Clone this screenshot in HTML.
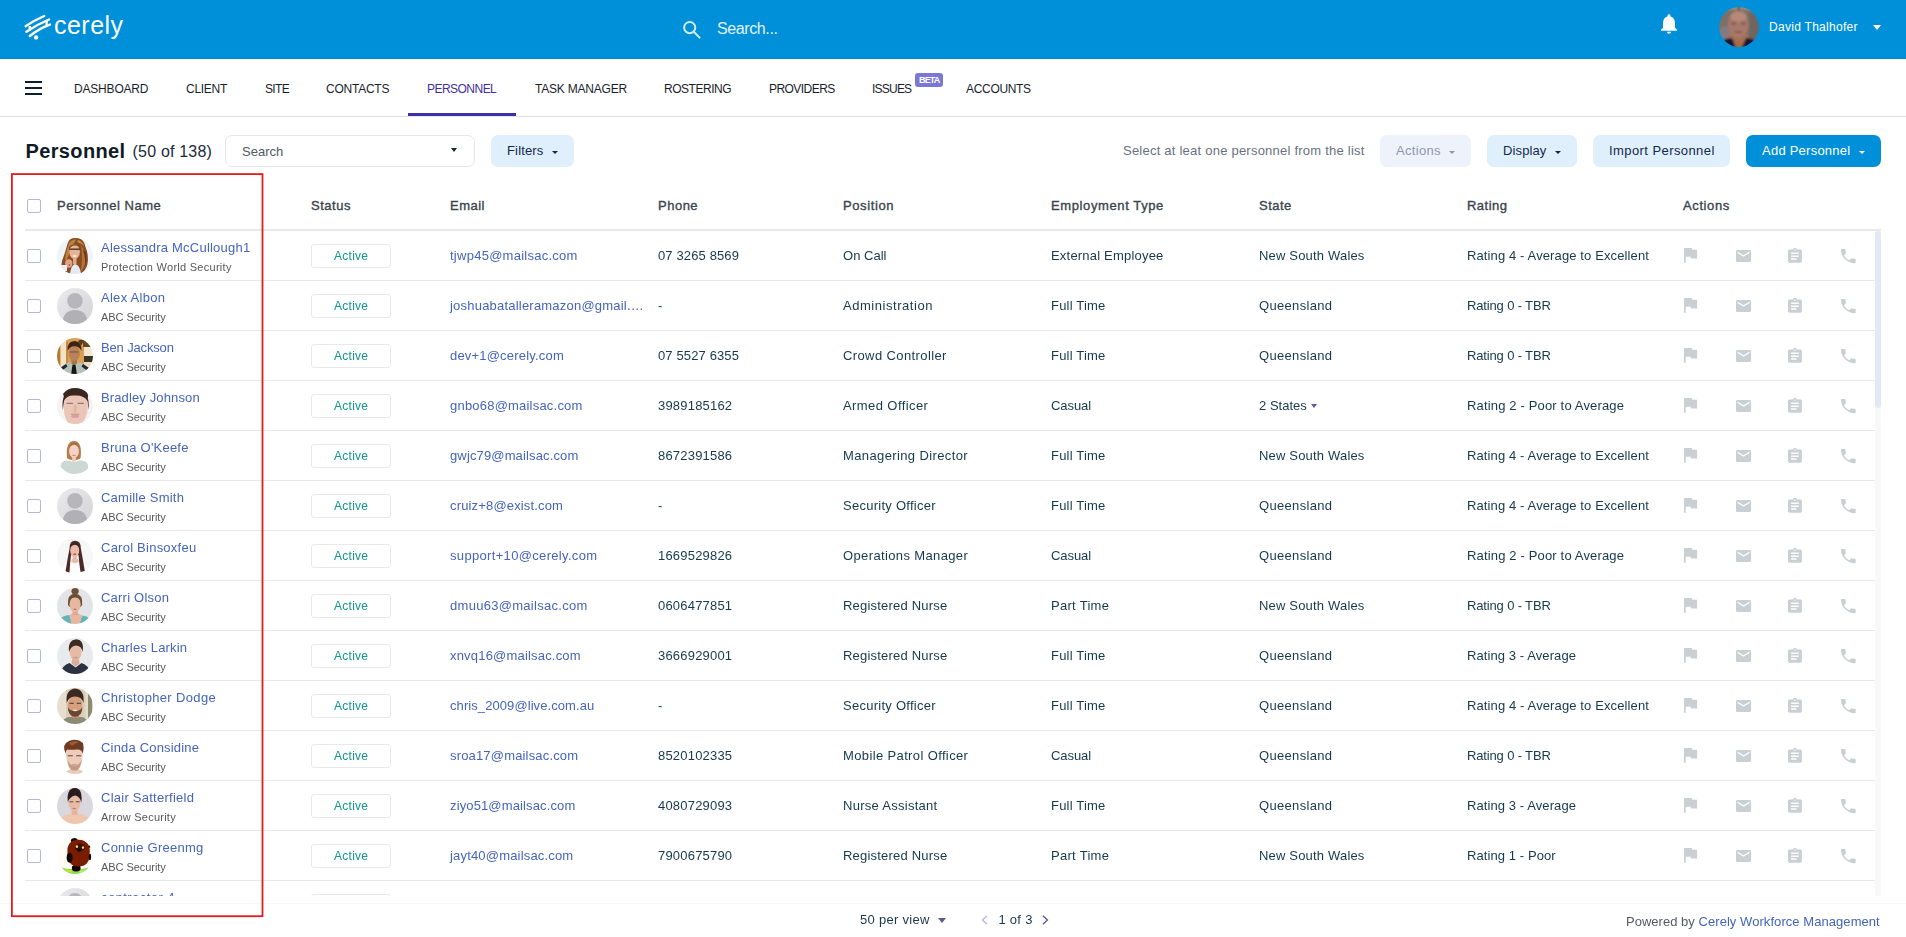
<!DOCTYPE html>
<html lang="en">
<head>
<meta charset="utf-8">
<title>Cerely - Personnel</title>
<style>
*{box-sizing:border-box;margin:0;padding:0}
html,body{width:1906px;height:937px;overflow:hidden;background:#fff}
body{position:relative;font-family:"Liberation Sans",sans-serif;font-size:13px;color:#1b3b50}
a{text-decoration:none;color:inherit}
.t{position:absolute;white-space:pre;display:block}
svg{display:block;position:absolute;overflow:visible}
.topbar{position:absolute;left:0;top:0;width:1906px;height:59px;background:#0090d9;border-bottom:1px solid #0087cd}
.nav{position:absolute;left:0;top:59px;width:1906px;height:58px;border-bottom:1px solid #dfe1ee;background:#fff}
.nav .bar{position:absolute;left:25px;width:17px;height:2px;background:#0b1f33}
.nav .active-line{position:absolute;left:408px;top:54px;width:108px;height:3px;background:#3f2fa3}
.beta{position:absolute;left:915px;top:14px;width:28px;height:14px;border-radius:3px;background:#7a77d6}
.toolbar{position:absolute;left:0;top:117px;width:1906px;height:58px}
.searchbox{position:absolute;left:225px;top:18px;width:250px;height:32px;border:1px solid #e6e6f0;border-radius:7px;background:#fff}
.btn{position:absolute;top:18px;height:32px;border-radius:7px;background:#e0effc}
.btn.disabled{background:#eef2fb}
.btn.primary{background:#0090d9}
.caret{position:absolute;width:0;height:0;border-left:3px solid transparent;border-right:3px solid transparent;border-top:3px solid #1b3b50}
.thead{position:absolute;left:25px;top:175px;width:1856px;height:56px;border-bottom:2px solid #e9e9ec}
.cb{position:absolute;width:14px;height:14px;border:1px solid #b3b6dd;border-radius:2px;background:#fff}
.tbody{position:absolute;left:0;top:231px;width:1906px;height:665px;overflow:hidden;will-change:transform}
.row{position:absolute;left:25px;width:1850px;height:50px;border-bottom:1px solid #e9e9ec}
.pill{position:absolute;left:286px;top:13px;width:80px;height:24px;border:1px solid #e9e9eb;border-radius:3px;background:#fff}
.av{position:absolute;left:32px;top:7px;width:36px;height:36px;border-radius:50%;overflow:hidden}
.scroll-track{position:absolute;left:1875px;top:231px;width:6px;height:665px;background:#f8f8f8}
.scroll-thumb{position:absolute;left:1875px;top:231px;width:6px;height:177px;border-radius:3px;background:#e2e9f4}
.footer{position:absolute;left:0;top:903px;width:1906px;height:34px;border-top:1px solid #f8f8fa;will-change:transform}
.th{-webkit-text-stroke:0.35px #3a444e}

</style>
</head>
<body>
<svg width="0" height="0" style="left:0;top:0"><defs><filter id="bl" x="-10%" y="-10%" width="120%" height="120%"><feGaussianBlur stdDeviation="0.6"/></filter><linearGradient id="pg" x1="0" y1="0" x2="1" y2="1"><stop offset="0" stop-color="#ebebed"/><stop offset="1" stop-color="#d3d3d6"/></linearGradient></defs></svg>
<header class="topbar">
<svg style="left:24px;top:14px" width="28" height="27" viewBox="24 14 28 27" fill="none" stroke="#fff" stroke-width="2.4" stroke-linecap="round">
<path d="M25.6 26.2 Q35 20 44.2 16"/>
<path d="M26.4 31.8 Q37 24.5 49 19.5"/>
<path d="M29.8 36 Q39 28.5 50 24.6"/>
<path d="M29.800 26 V30.400 M46.600 20.600 V26" stroke-width="2.4" stroke-linecap="butt"/>
<circle cx="36.1" cy="37.4" r="2.2" fill="#fff" stroke="none"/>
</svg>
<span class="t" style="left:54px;top:9px;font-size:25px;line-height:33px;color:#fff;letter-spacing:0.47px">cerely</span>
<svg style="left:682px;top:20px" width="20" height="20" viewBox="682 20 20 20" fill="none" stroke="#d4ece6" stroke-width="2" stroke-linecap="round"><circle cx="689.7" cy="27.6" r="5.6"/><path d="M694 32 L699.6 37.6"/></svg>
<span class="t" style="left:717px;top:17px;font-size:16px;line-height:24px;color:#e3f3fb;letter-spacing:-0.39px">Search...</span>
<svg style="left:1661px;top:14px" width="16" height="20" viewBox="4 2.5 16 19.5" fill="#fff"><path d="M12 22c1.1 0 2-.9 2-2h-4c0 1.1.89 2 2 2zm6-6v-5c0-3.07-1.64-5.64-4.5-6.32V4c0-.83-.67-1.500-1.500-1.500s-1.500.67-1.500 1.500v.68C7.630 5.360 6 7.920 6 11v5l-2 2v1h16v-1l-2-2z"/></svg>
<svg style="left:1719px;top:7px" width="40" height="40" viewBox="0 0 40 40"><defs><clipPath id="uc"><circle cx="20" cy="20" r="19.900"/></clipPath><filter id="ub" x="-10%" y="-10%" width="120%" height="120%"><feGaussianBlur stdDeviation="1.1"/></filter></defs><g clip-path="url(#uc)"><g filter="url(#ub)"><rect x="-3" y="-3" width="46" height="46" fill="#7b7067"/><rect x="-3" y="-3" width="46" height="6" fill="#96897c"/><rect x="19" y="-3" width="1.500" height="7" fill="#4a4038"/><ellipse cx="6" cy="28" rx="7" ry="9" fill="#857a80"/><rect x="30" y="6" width="13" height="30" fill="#70665f"/><rect x="10" y="27" width="19" height="16" fill="#a56e55"/><path d="M0 43 L3 34 Q8 30.500 13 31 L18.500 43 Z" fill="#1b1930"/><path d="M40 43 L36.500 34 Q32 30.500 27 31 L21.500 43 Z" fill="#1b1930"/><ellipse cx="19.300" cy="17.500" rx="10.200" ry="13.800" fill="#a8786a"/><ellipse cx="19.500" cy="9.500" rx="8" ry="5" fill="#b68978"/><ellipse cx="14.600" cy="16.600" rx="2.800" ry="1.300" fill="#80565a"/><ellipse cx="24.200" cy="16.600" rx="2.800" ry="1.300" fill="#80565a"/><ellipse cx="19.500" cy="25" rx="4" ry="1" fill="#8a5550"/><ellipse cx="19.500" cy="38" rx="4" ry="3" fill="#a9683f"/></g></g></svg>
<span class="t" style="left:1769px;top:17px;font-size:12px;line-height:20px;color:#fff;letter-spacing:0.29px">David Thalhofer</span>
<i class="caret" style="left:1873px;top:25px;border-left-width:4.0px;border-right-width:4.0px;border-top:5px solid #fff"></i>
</header>
<nav class="nav">
<i class="bar" style="top:22px"></i><i class="bar" style="top:28px"></i><i class="bar" style="top:34px"></i>
<a class="t" style="left:74px;top:20px;font-size:12px;line-height:20px;color:#1a1e2c;letter-spacing:-0.19px">DASHBOARD</a>
<a class="t" style="left:186px;top:20px;font-size:12px;line-height:20px;color:#1a1e2c;letter-spacing:-0.28px">CLIENT</a>
<a class="t" style="left:265px;top:20px;font-size:12px;line-height:20px;color:#1a1e2c;letter-spacing:-0.64px">SITE</a>
<a class="t" style="left:326px;top:20px;font-size:12px;line-height:20px;color:#1a1e2c;letter-spacing:-0.24px">CONTACTS</a>
<a class="t" style="left:427px;top:20px;font-size:12px;line-height:20px;color:#3f2fa3;letter-spacing:-0.53px">PERSONNEL</a>
<a class="t" style="left:535px;top:20px;font-size:12px;line-height:20px;color:#1a1e2c;letter-spacing:-0.21px">TASK MANAGER</a>
<a class="t" style="left:664px;top:20px;font-size:12px;line-height:20px;color:#1a1e2c;letter-spacing:-0.46px">ROSTERING</a>
<a class="t" style="left:769px;top:20px;font-size:12px;line-height:20px;color:#1a1e2c;letter-spacing:-0.55px">PROVIDERS</a>
<a class="t" style="left:872px;top:20px;font-size:12px;line-height:20px;color:#1a1e2c;letter-spacing:-0.78px">ISSUES</a>
<a class="t" style="left:966px;top:20px;font-size:12px;line-height:20px;color:#1a1e2c;letter-spacing:-0.32px">ACCOUNTS</a>
<i class="active-line"></i>
<i class="beta"></i>
<span class="t" style="left:919px;top:13px;font-size:9px;line-height:17px;color:#fff;font-weight:bold;letter-spacing:-0.83px">BETA</span>
</nav>
<section class="toolbar">
<h1 class="t" style="left:25.6px;top:20px;font-size:20px;line-height:28px;color:#0e1b26;font-weight:bold;letter-spacing:0.34px">Personnel</h1>
<span class="t" style="left:132.6px;top:23px;font-size:16px;line-height:24px;color:#1b2a3a;letter-spacing:0.19px">(50 of 138)</span>
<div class="searchbox"></div>
<span class="t" style="left:242px;top:24px;font-size:13px;line-height:21px;color:#525a64;letter-spacing:0.03px">Search</span>
<i class="caret" style="left:451px;top:31px;border-left-width:3.0px;border-right-width:3.0px;border-top:4px solid #1c2530"></i>
<div class="btn" style="left:491px;width:83px"></div>
<span class="t" style="left:507px;top:23px;font-size:13px;line-height:21px;color:#13294b;letter-spacing:0.16px">Filters</span>
<i class="caret" style="left:552px;top:34px;border-left-width:3.0px;border-right-width:3.0px;border-top:3px solid #12283a"></i>
<span class="t" style="left:1123px;top:23px;font-size:13px;line-height:21px;color:#68727e;letter-spacing:0.23px">Select at leat one personnel from the list</span>
<div class="btn disabled" style="left:1380px;width:91px"></div>
<span class="t" style="left:1396px;top:23px;font-size:13px;line-height:21px;color:#8e98aa;letter-spacing:0.31px">Actions</span>
<i class="caret" style="left:1449px;top:34px;border-left-width:3.0px;border-right-width:3.0px;border-top:3px solid #8e98aa"></i>
<div class="btn" style="left:1487px;width:90px"></div>
<span class="t" style="left:1503px;top:23px;font-size:13px;line-height:21px;color:#13294b;letter-spacing:0.12px">Display</span>
<i class="caret" style="left:1555px;top:34px;border-left-width:3.0px;border-right-width:3.0px;border-top:3px solid #12283a"></i>
<div class="btn" style="left:1593px;width:137px"></div>
<span class="t" style="left:1609px;top:23px;font-size:13px;line-height:21px;color:#13294b;letter-spacing:0.42px">Import Personnel</span>
<div class="btn primary" style="left:1746px;width:135px"></div>
<span class="t" style="left:1762px;top:23px;font-size:13px;line-height:21px;color:#fff;letter-spacing:0.24px">Add Personnel</span>
<i class="caret" style="left:1859px;top:34px;border-left-width:3.0px;border-right-width:3.0px;border-top:3px solid #fff"></i>
</section>
<div class="thead">
<i class="cb" style="left:2px;top:24px"></i>
<span class="t th" style="left:32px;top:20px;font-size:13px;line-height:21px;color:#3a444e;letter-spacing:0.54px">Personnel Name</span>
<span class="t th" style="left:286px;top:20px;font-size:13px;line-height:21px;color:#3a444e;letter-spacing:0.52px">Status</span>
<span class="t th" style="left:425px;top:20px;font-size:13px;line-height:21px;color:#3a444e;letter-spacing:0.49px">Email</span>
<span class="t th" style="left:633px;top:20px;font-size:13px;line-height:21px;color:#3a444e;letter-spacing:0.5px">Phone</span>
<span class="t th" style="left:818px;top:20px;font-size:13px;line-height:21px;color:#3a444e;letter-spacing:0.6px">Position</span>
<span class="t th" style="left:1026px;top:20px;font-size:13px;line-height:21px;color:#3a444e;letter-spacing:0.61px">Employment Type</span>
<span class="t th" style="left:1234px;top:20px;font-size:13px;line-height:21px;color:#3a444e;letter-spacing:0.48px">State</span>
<span class="t th" style="left:1442px;top:20px;font-size:13px;line-height:21px;color:#3a444e;letter-spacing:0.48px">Rating</span>
<span class="t th" style="left:1658px;top:20px;font-size:13px;line-height:21px;color:#3a444e;letter-spacing:0.61px">Actions</span>
</div>
<div class="tbody">
<div class="row" style="top:0px">
<i class="cb" style="left:2px;top:18px"></i>
<div class="av"><svg style="left:0;top:0" width="36" height="36" viewBox="0 0 36 36"><g filter="url(#bl)"><rect x="-2" y="-2" width="40" height="40" fill="#eef4f7"/><path d="M10.500 6 Q12 -0.500 19 -0.500 Q27 0 28.500 9 Q32 17 30.500 26 Q29 33 23 36 L9 36 Q3 31 5 23 Q8 15 10.500 6 Z" fill="#8a4e22"/><path d="M12 5 Q15 1 19 1.500 Q16 6 13 14 Q11 20 7.500 25 Q8.500 14 12 5 Z" fill="#bd7f42"/><path d="M24 7 Q28.500 14 29 24 Q27 30 23.500 34 Q26.500 22 24 7 Z" fill="#b3733a"/><path d="M8 22 Q7 28 10 33 Q9 27 10.500 22 Z" fill="#6a3817"/><path d="M26 12 Q29 20 27.500 29 Q30.500 22 29 14 Z" fill="#6a3817"/><path d="M21 2 Q25 3 27 8 Q24 5 20 4 Z" fill="#c98c4c"/><path d="M13 36 Q14 27 18 26 Q23 27 24 36 Z" fill="#e4eaf3"/><ellipse cx="17.6" cy="13.8" rx="5.3" ry="7.2" fill="#e8b496"/><rect x="16" y="20" width="3.5" height="6" fill="#e2aa8a"/><path d="M12 9 Q17 3.500 23.400 9 Q20 7.300 17.500 7.600 Q14 7.800 12 11.500 Z" fill="#7c441d"/><rect x="12.2" y="10.5" width="11" height="1.4" fill="#4a3428"/><ellipse cx="17.8" cy="18" rx="2.2" ry="0.8" fill="#fff"/><ellipse cx="11.7" cy="25.5" rx="3.6" ry="4.2" fill="#e0a585"/><ellipse cx="12.5" cy="27" rx="0.7" ry="0.7" fill="#a02030"/><rect x="3" y="27" width="7" height="6" fill="#e9eef6"/></g></svg></div>
<a class="t" style="left:76px;top:6px;font-size:13px;line-height:21px;color:#4565bd;letter-spacing:0.22px">Alessandra McCullough1</a>
<span class="t" style="left:76px;top:27px;font-size:11px;line-height:19px;color:#585858;letter-spacing:0.27px">Protection World Security</span>
<i class="pill"></i>
<span class="t" style="left:309px;top:15px;font-size:12px;line-height:20px;color:#12978a;letter-spacing:0.27px">Active</span>
<a class="t" style="left:425px;top:14px;font-size:13px;line-height:21px;color:#4565bd;letter-spacing:0.26px">tjwp45@mailsac.com</a>
<span class="t" style="left:633px;top:14px;font-size:13px;line-height:21px;color:#15394d;letter-spacing:0.13px">07 3265 8569</span>
<span class="t" style="left:818px;top:14px;font-size:13px;line-height:21px;color:#15394d;letter-spacing:0.02px">On Call</span>
<span class="t" style="left:1026px;top:14px;font-size:13px;line-height:21px;color:#15394d;letter-spacing:0.2px">External Employee</span>
<span class="t" style="left:1234px;top:14px;font-size:13px;line-height:21px;color:#15394d;letter-spacing:0.18px">New South Wales</span>
<span class="t" style="left:1442px;top:14px;font-size:13px;line-height:21px;color:#15394d;letter-spacing:0.12px">Rating 4 - Average to Excellent</span>
<svg style="left:1659px;top:17.3px" width="13.1" height="14.8" viewBox="5 4 15 17" preserveAspectRatio="none" fill="#c9cfd3"><path d="M14.4 6L14 4H5v17h2v-7h5.6l.4 2h7V6z"/></svg><svg style="left:1710.6px;top:18.9px" width="15.1" height="12" viewBox="2 4 20 16" preserveAspectRatio="none" fill="#c9cfd3"><path d="M20 4H4c-1.1 0-1.990.9-1.990 2L2 18c0 1.1.9 2 2 2h16c1.1 0 2-.9 2-2V6c0-1.1-.9-2-2-2zm0 4l-8 5-8-5V6l8 5 8-5v2z"/></svg><svg style="left:1763px;top:17.3px" width="13.9" height="14.8" viewBox="3 1 18 20" preserveAspectRatio="none" fill="#c9cfd3"><path d="M19 3h-4.180C14.400 1.840 13.300 1 12 1c-1.300 0-2.400.84-2.820 2H5c-1.100 0-2 .9-2 2v14c0 1.100.9 2 2 2h14c1.100 0 2-.9 2-2V5c0-1.100-.9-2-2-2zm-7 0c.55 0 1 .45 1 1s-.45 1-1 1-1-.45-1-1 .45-1 1-1zm2 14H7v-2h7v2zm3-4H7v-2h10v2zm0-4H7V7h10v2z"/></svg><svg style="left:1815.6px;top:18px" width="14.7" height="14.2" viewBox="3 3 18 18" preserveAspectRatio="none" fill="#c9cfd3"><path d="M6.620 10.790c1.440 2.830 3.760 5.140 6.590 6.590l2.200-2.200c.27-.27.67-.36 1.020-.24 1.120.37 2.330.57 3.570.57.55 0 1 .45 1 1V20c0 .55-.45 1-1 1-9.390 0-17-7.610-17-17 0-.55.45-1 1-1h3.500c.55 0 1 .45 1 1 0 1.250.2 2.450.57 3.570.11.35.03.74-.25 1.020l-2.200 2.200z"/></svg>
</div>
<div class="row" style="top:50px">
<i class="cb" style="left:2px;top:18px"></i>
<div class="av"><svg style="left:0;top:0" width="36" height="36" viewBox="0 0 36 36"><rect x="0" y="0" width="36" height="36" fill="url(#pg)"/><circle cx="18" cy="12.900" r="8.600" fill="#e6e6e8"/><circle cx="18" cy="12.900" r="7.900" fill="#b7b7bb"/><path d="M5.600 36 Q5.600 22 18 22 Q30.400 22 30.400 36 Z" fill="#b1b1b5"/></svg></div>
<a class="t" style="left:76px;top:6px;font-size:13px;line-height:21px;color:#4565bd;letter-spacing:0.28px">Alex Albon</a>
<span class="t" style="left:76px;top:27px;font-size:11px;line-height:19px;color:#585858;letter-spacing:-0.05px">ABC Security</span>
<i class="pill"></i>
<span class="t" style="left:309px;top:15px;font-size:12px;line-height:20px;color:#12978a;letter-spacing:0.27px">Active</span>
<a class="t" style="left:425px;top:14px;font-size:13px;line-height:21px;color:#4565bd;letter-spacing:0.21px">joshuabatalleramazon@gmail.…</a>
<span class="t" style="left:633px;top:14px;font-size:13px;line-height:21px;color:#15394d;letter-spacing:-0.16px">-</span>
<span class="t" style="left:818px;top:14px;font-size:13px;line-height:21px;color:#15394d;letter-spacing:0.54px">Administration</span>
<span class="t" style="left:1026px;top:14px;font-size:13px;line-height:21px;color:#15394d;letter-spacing:0.2px">Full Time</span>
<span class="t" style="left:1234px;top:14px;font-size:13px;line-height:21px;color:#15394d;letter-spacing:0.32px">Queensland</span>
<span class="t" style="left:1442px;top:14px;font-size:13px;line-height:21px;color:#15394d;letter-spacing:-0.15px">Rating 0 - TBR</span>
<svg style="left:1659px;top:17.3px" width="13.1" height="14.8" viewBox="5 4 15 17" preserveAspectRatio="none" fill="#c9cfd3"><path d="M14.4 6L14 4H5v17h2v-7h5.6l.4 2h7V6z"/></svg><svg style="left:1710.6px;top:18.9px" width="15.1" height="12" viewBox="2 4 20 16" preserveAspectRatio="none" fill="#c9cfd3"><path d="M20 4H4c-1.1 0-1.990.9-1.990 2L2 18c0 1.1.9 2 2 2h16c1.1 0 2-.9 2-2V6c0-1.1-.9-2-2-2zm0 4l-8 5-8-5V6l8 5 8-5v2z"/></svg><svg style="left:1763px;top:17.3px" width="13.9" height="14.8" viewBox="3 1 18 20" preserveAspectRatio="none" fill="#c9cfd3"><path d="M19 3h-4.180C14.400 1.840 13.300 1 12 1c-1.300 0-2.400.84-2.820 2H5c-1.100 0-2 .9-2 2v14c0 1.100.9 2 2 2h14c1.100 0 2-.9 2-2V5c0-1.100-.9-2-2-2zm-7 0c.55 0 1 .45 1 1s-.45 1-1 1-1-.45-1-1 .45-1 1-1zm2 14H7v-2h7v2zm3-4H7v-2h10v2zm0-4H7V7h10v2z"/></svg><svg style="left:1815.6px;top:18px" width="14.7" height="14.2" viewBox="3 3 18 18" preserveAspectRatio="none" fill="#c9cfd3"><path d="M6.620 10.790c1.440 2.830 3.760 5.140 6.590 6.590l2.200-2.200c.27-.27.67-.36 1.020-.24 1.120.37 2.330.57 3.570.57.55 0 1 .45 1 1V20c0 .55-.45 1-1 1-9.390 0-17-7.610-17-17 0-.55.45-1 1-1h3.500c.55 0 1 .45 1 1 0 1.250.2 2.450.57 3.570.11.35.03.74-.25 1.020l-2.200 2.200z"/></svg>
</div>
<div class="row" style="top:100px">
<i class="cb" style="left:2px;top:18px"></i>
<div class="av"><svg style="left:0;top:0" width="36" height="36" viewBox="0 0 36 36"><g filter="url(#bl)"><rect x="-2" y="-2" width="40" height="40" fill="#dca055"/><rect x="0" y="0" width="3.5" height="36" fill="#b87830"/><rect x="3.5" y="0" width="5.5" height="36" fill="#f3e2c4"/><rect x="9" y="4" width="2" height="30" fill="#c88a40"/><rect x="26" y="0" width="10" height="9" fill="#6e4420"/><rect x="27" y="9" width="9" height="9" fill="#f6e8d0"/><rect x="27" y="18" width="9" height="6" fill="#3a3028"/><rect x="27" y="24" width="9" height="12" fill="#f0dcb8"/><path d="M2 36 Q4 26 12 24.500 L23 24.500 Q31 26 33 36 Z" fill="#b6c2b6"/><path d="M3 30 L9 26 L10.500 28.500 L4.500 33 Z" fill="#23283a"/><path d="M32 30 L26 26 L24.500 28.500 L30.500 33 Z" fill="#23283a"/><rect x="14.5" y="21" width="5.5" height="5" fill="#a8744c"/><path d="M15.500 26.500 L18.500 26.500 L19.800 36 L14.200 36 Z" fill="#151518"/><ellipse cx="17.2" cy="15.5" rx="5.7" ry="7.6" fill="#b8825a"/><path d="M10.600 13 Q10 3 17.500 3 Q25 3 24.400 13 Q22.500 8.500 17.500 8.300 Q12.500 8.500 10.600 13 Z" fill="#3a2616"/><path d="M21 3 Q26 0 27 4 Q25 5 24 8 Z" fill="#5a3a1c"/><rect x="13" y="13.5" width="8.5" height="0.9" fill="#6a4a38"/></g></svg></div>
<a class="t" style="left:76px;top:6px;font-size:13px;line-height:21px;color:#4565bd;letter-spacing:-0.15px">Ben Jackson</a>
<span class="t" style="left:76px;top:27px;font-size:11px;line-height:19px;color:#585858;letter-spacing:-0.05px">ABC Security</span>
<i class="pill"></i>
<span class="t" style="left:309px;top:15px;font-size:12px;line-height:20px;color:#12978a;letter-spacing:0.27px">Active</span>
<a class="t" style="left:425px;top:14px;font-size:13px;line-height:21px;color:#4565bd;letter-spacing:0.19px">dev+1@cerely.com</a>
<span class="t" style="left:633px;top:14px;font-size:13px;line-height:21px;color:#15394d;letter-spacing:0.13px">07 5527 6355</span>
<span class="t" style="left:818px;top:14px;font-size:13px;line-height:21px;color:#15394d;letter-spacing:0.39px">Crowd Controller</span>
<span class="t" style="left:1026px;top:14px;font-size:13px;line-height:21px;color:#15394d;letter-spacing:0.2px">Full Time</span>
<span class="t" style="left:1234px;top:14px;font-size:13px;line-height:21px;color:#15394d;letter-spacing:0.32px">Queensland</span>
<span class="t" style="left:1442px;top:14px;font-size:13px;line-height:21px;color:#15394d;letter-spacing:-0.15px">Rating 0 - TBR</span>
<svg style="left:1659px;top:17.3px" width="13.1" height="14.8" viewBox="5 4 15 17" preserveAspectRatio="none" fill="#c9cfd3"><path d="M14.4 6L14 4H5v17h2v-7h5.6l.4 2h7V6z"/></svg><svg style="left:1710.6px;top:18.9px" width="15.1" height="12" viewBox="2 4 20 16" preserveAspectRatio="none" fill="#c9cfd3"><path d="M20 4H4c-1.1 0-1.990.9-1.990 2L2 18c0 1.1.9 2 2 2h16c1.1 0 2-.9 2-2V6c0-1.1-.9-2-2-2zm0 4l-8 5-8-5V6l8 5 8-5v2z"/></svg><svg style="left:1763px;top:17.3px" width="13.9" height="14.8" viewBox="3 1 18 20" preserveAspectRatio="none" fill="#c9cfd3"><path d="M19 3h-4.180C14.400 1.840 13.300 1 12 1c-1.300 0-2.400.84-2.820 2H5c-1.100 0-2 .9-2 2v14c0 1.100.9 2 2 2h14c1.100 0 2-.9 2-2V5c0-1.100-.9-2-2-2zm-7 0c.55 0 1 .45 1 1s-.45 1-1 1-1-.45-1-1 .45-1 1-1zm2 14H7v-2h7v2zm3-4H7v-2h10v2zm0-4H7V7h10v2z"/></svg><svg style="left:1815.6px;top:18px" width="14.7" height="14.2" viewBox="3 3 18 18" preserveAspectRatio="none" fill="#c9cfd3"><path d="M6.620 10.790c1.440 2.830 3.760 5.140 6.590 6.590l2.200-2.200c.27-.27.67-.36 1.020-.24 1.120.37 2.330.57 3.570.57.55 0 1 .45 1 1V20c0 .55-.45 1-1 1-9.390 0-17-7.610-17-17 0-.55.45-1 1-1h3.500c.55 0 1 .45 1 1 0 1.250.2 2.450.57 3.570.11.35.03.74-.25 1.020l-2.200 2.200z"/></svg>
</div>
<div class="row" style="top:150px">
<i class="cb" style="left:2px;top:18px"></i>
<div class="av"><svg style="left:0;top:0" width="36" height="36" viewBox="0 0 36 36"><g filter="url(#bl)"><rect x="-2" y="-2" width="40" height="40" fill="#f3f3f3"/><path d="M5.800 22 Q3.500 2 18 -1 Q33.500 1 31.500 22 L30.500 14 Q26 8 18 8.500 Q10 9 7 14 Z" fill="#3a2823"/><path d="M7 13 Q9 7 18 7.500 Q27 7 30.500 13 Q32 26 26 34 Q22 37.500 18 37.500 Q14 37.500 10.500 34 Q5.500 26 7 13 Z" fill="#ebc6b6"/><path d="M6 6 Q12 -2 24 0 Q32 3 31 10 Q26 5 19 6 Q12 6 8 11 Z" fill="#3a2823"/><rect x="9.5" y="14.8" width="6.5" height="1.2" fill="#8a7a80"/><rect x="20.5" y="14.8" width="6.5" height="1.2" fill="#8a7a80"/><rect x="16.8" y="17" width="2.6" height="7.5" fill="#e0b4a4"/><ellipse cx="18.2" cy="28.6" rx="4" ry="1.4" fill="#d9a0a2"/><ellipse cx="18.2" cy="26.5" rx="4.5" ry="1" fill="#caa090"/></g></svg></div>
<a class="t" style="left:76px;top:6px;font-size:13px;line-height:21px;color:#4565bd;letter-spacing:0.13px">Bradley Johnson</a>
<span class="t" style="left:76px;top:27px;font-size:11px;line-height:19px;color:#585858;letter-spacing:-0.05px">ABC Security</span>
<i class="pill"></i>
<span class="t" style="left:309px;top:15px;font-size:12px;line-height:20px;color:#12978a;letter-spacing:0.27px">Active</span>
<a class="t" style="left:425px;top:14px;font-size:13px;line-height:21px;color:#4565bd;letter-spacing:0.21px">gnbo68@mailsac.com</a>
<span class="t" style="left:633px;top:14px;font-size:13px;line-height:21px;color:#15394d;letter-spacing:0.2px">3989185162</span>
<span class="t" style="left:818px;top:14px;font-size:13px;line-height:21px;color:#15394d;letter-spacing:0.41px">Armed Officer</span>
<span class="t" style="left:1026px;top:14px;font-size:13px;line-height:21px;color:#15394d;letter-spacing:-0.06px">Casual</span>
<span class="t" style="left:1234px;top:14px;font-size:13px;line-height:21px;color:#15394d;letter-spacing:0.02px">2 States</span>
<i class="caret" style="left:1286px;top:23px;border-left-width:3.0px;border-right-width:3.0px;border-top:4px solid #5e5a9a"></i>
<span class="t" style="left:1442px;top:14px;font-size:13px;line-height:21px;color:#15394d;letter-spacing:0.16px">Rating 2 - Poor to Average</span>
<svg style="left:1659px;top:17.3px" width="13.1" height="14.8" viewBox="5 4 15 17" preserveAspectRatio="none" fill="#c9cfd3"><path d="M14.4 6L14 4H5v17h2v-7h5.6l.4 2h7V6z"/></svg><svg style="left:1710.6px;top:18.9px" width="15.1" height="12" viewBox="2 4 20 16" preserveAspectRatio="none" fill="#c9cfd3"><path d="M20 4H4c-1.1 0-1.990.9-1.990 2L2 18c0 1.1.9 2 2 2h16c1.1 0 2-.9 2-2V6c0-1.1-.9-2-2-2zm0 4l-8 5-8-5V6l8 5 8-5v2z"/></svg><svg style="left:1763px;top:17.3px" width="13.9" height="14.8" viewBox="3 1 18 20" preserveAspectRatio="none" fill="#c9cfd3"><path d="M19 3h-4.180C14.400 1.840 13.300 1 12 1c-1.300 0-2.400.84-2.820 2H5c-1.100 0-2 .9-2 2v14c0 1.100.9 2 2 2h14c1.100 0 2-.9 2-2V5c0-1.100-.9-2-2-2zm-7 0c.55 0 1 .45 1 1s-.45 1-1 1-1-.45-1-1 .45-1 1-1zm2 14H7v-2h7v2zm3-4H7v-2h10v2zm0-4H7V7h10v2z"/></svg><svg style="left:1815.6px;top:18px" width="14.7" height="14.2" viewBox="3 3 18 18" preserveAspectRatio="none" fill="#c9cfd3"><path d="M6.620 10.790c1.440 2.830 3.760 5.140 6.590 6.590l2.200-2.200c.27-.27.67-.36 1.020-.24 1.120.37 2.330.57 3.570.57.55 0 1 .45 1 1V20c0 .55-.45 1-1 1-9.390 0-17-7.610-17-17 0-.55.45-1 1-1h3.500c.55 0 1 .45 1 1 0 1.250.2 2.450.57 3.570.11.35.03.74-.25 1.020l-2.200 2.200z"/></svg>
</div>
<div class="row" style="top:200px">
<i class="cb" style="left:2px;top:18px"></i>
<div class="av"><svg style="left:0;top:0" width="36" height="36" viewBox="0 0 36 36"><g filter="url(#bl)"><rect x="-2" y="-2" width="40" height="40" fill="#ffffff"/><path d="M10 20 Q8.500 3 17 3 Q25.500 3 23.600 20 Q22 22 17 22 Q12 22 10 20 Z" fill="#b57d4d"/><ellipse cx="17" cy="13.2" rx="4.9" ry="6.8" fill="#f3d4c4"/><path d="M12 9 Q14 4.500 17 4.600 Q21 4.500 22.200 9.500 Q19 6.500 17 6.800 Q14 7 12 9 Z" fill="#a87040"/><rect x="15.2" y="18.5" width="3.6" height="5" fill="#efcbb8"/><path d="M3.800 27 Q4.500 22.500 12 22.600 Q17 25 22 22.600 Q30 22.500 31 27 Q32 33 28 34 Q22 36 17 36 Q10 36 6 34 Q2.800 32 3.800 27 Z" fill="#cdd8d4"/><ellipse cx="17" cy="17.4" rx="1.8" ry="0.7" fill="#d98080"/></g></svg></div>
<a class="t" style="left:76px;top:6px;font-size:13px;line-height:21px;color:#4565bd;letter-spacing:0.21px">Bruna O&#x27;Keefe</a>
<span class="t" style="left:76px;top:27px;font-size:11px;line-height:19px;color:#585858;letter-spacing:-0.05px">ABC Security</span>
<i class="pill"></i>
<span class="t" style="left:309px;top:15px;font-size:12px;line-height:20px;color:#12978a;letter-spacing:0.27px">Active</span>
<a class="t" style="left:425px;top:14px;font-size:13px;line-height:21px;color:#4565bd;letter-spacing:0.14px">gwjc79@mailsac.com</a>
<span class="t" style="left:633px;top:14px;font-size:13px;line-height:21px;color:#15394d;letter-spacing:0.2px">8672391586</span>
<span class="t" style="left:818px;top:14px;font-size:13px;line-height:21px;color:#15394d;letter-spacing:0.38px">Managering Director</span>
<span class="t" style="left:1026px;top:14px;font-size:13px;line-height:21px;color:#15394d;letter-spacing:0.2px">Full Time</span>
<span class="t" style="left:1234px;top:14px;font-size:13px;line-height:21px;color:#15394d;letter-spacing:0.18px">New South Wales</span>
<span class="t" style="left:1442px;top:14px;font-size:13px;line-height:21px;color:#15394d;letter-spacing:0.12px">Rating 4 - Average to Excellent</span>
<svg style="left:1659px;top:17.3px" width="13.1" height="14.8" viewBox="5 4 15 17" preserveAspectRatio="none" fill="#c9cfd3"><path d="M14.4 6L14 4H5v17h2v-7h5.6l.4 2h7V6z"/></svg><svg style="left:1710.6px;top:18.9px" width="15.1" height="12" viewBox="2 4 20 16" preserveAspectRatio="none" fill="#c9cfd3"><path d="M20 4H4c-1.1 0-1.990.9-1.990 2L2 18c0 1.1.9 2 2 2h16c1.1 0 2-.9 2-2V6c0-1.1-.9-2-2-2zm0 4l-8 5-8-5V6l8 5 8-5v2z"/></svg><svg style="left:1763px;top:17.3px" width="13.9" height="14.8" viewBox="3 1 18 20" preserveAspectRatio="none" fill="#c9cfd3"><path d="M19 3h-4.180C14.400 1.840 13.300 1 12 1c-1.300 0-2.400.84-2.820 2H5c-1.100 0-2 .9-2 2v14c0 1.100.9 2 2 2h14c1.100 0 2-.9 2-2V5c0-1.100-.9-2-2-2zm-7 0c.55 0 1 .45 1 1s-.45 1-1 1-1-.45-1-1 .45-1 1-1zm2 14H7v-2h7v2zm3-4H7v-2h10v2zm0-4H7V7h10v2z"/></svg><svg style="left:1815.6px;top:18px" width="14.7" height="14.2" viewBox="3 3 18 18" preserveAspectRatio="none" fill="#c9cfd3"><path d="M6.620 10.790c1.440 2.830 3.760 5.140 6.590 6.590l2.200-2.200c.27-.27.67-.36 1.020-.24 1.120.37 2.330.57 3.570.57.55 0 1 .45 1 1V20c0 .55-.45 1-1 1-9.390 0-17-7.610-17-17 0-.55.45-1 1-1h3.500c.55 0 1 .45 1 1 0 1.250.2 2.450.57 3.570.11.35.03.74-.25 1.020l-2.200 2.200z"/></svg>
</div>
<div class="row" style="top:250px">
<i class="cb" style="left:2px;top:18px"></i>
<div class="av"><svg style="left:0;top:0" width="36" height="36" viewBox="0 0 36 36"><rect x="0" y="0" width="36" height="36" fill="url(#pg)"/><circle cx="18" cy="12.900" r="8.600" fill="#e6e6e8"/><circle cx="18" cy="12.900" r="7.900" fill="#b7b7bb"/><path d="M5.600 36 Q5.600 22 18 22 Q30.400 22 30.400 36 Z" fill="#b1b1b5"/></svg></div>
<a class="t" style="left:76px;top:6px;font-size:13px;line-height:21px;color:#4565bd;letter-spacing:0.23px">Camille Smith</a>
<span class="t" style="left:76px;top:27px;font-size:11px;line-height:19px;color:#585858;letter-spacing:-0.05px">ABC Security</span>
<i class="pill"></i>
<span class="t" style="left:309px;top:15px;font-size:12px;line-height:20px;color:#12978a;letter-spacing:0.27px">Active</span>
<a class="t" style="left:425px;top:14px;font-size:13px;line-height:21px;color:#4565bd;letter-spacing:0.16px">cruiz+8@exist.com</a>
<span class="t" style="left:633px;top:14px;font-size:13px;line-height:21px;color:#15394d;letter-spacing:-0.16px">-</span>
<span class="t" style="left:818px;top:14px;font-size:13px;line-height:21px;color:#15394d;letter-spacing:0.26px">Security Officer</span>
<span class="t" style="left:1026px;top:14px;font-size:13px;line-height:21px;color:#15394d;letter-spacing:0.2px">Full Time</span>
<span class="t" style="left:1234px;top:14px;font-size:13px;line-height:21px;color:#15394d;letter-spacing:0.32px">Queensland</span>
<span class="t" style="left:1442px;top:14px;font-size:13px;line-height:21px;color:#15394d;letter-spacing:0.12px">Rating 4 - Average to Excellent</span>
<svg style="left:1659px;top:17.3px" width="13.1" height="14.8" viewBox="5 4 15 17" preserveAspectRatio="none" fill="#c9cfd3"><path d="M14.4 6L14 4H5v17h2v-7h5.6l.4 2h7V6z"/></svg><svg style="left:1710.6px;top:18.9px" width="15.1" height="12" viewBox="2 4 20 16" preserveAspectRatio="none" fill="#c9cfd3"><path d="M20 4H4c-1.1 0-1.990.9-1.990 2L2 18c0 1.1.9 2 2 2h16c1.1 0 2-.9 2-2V6c0-1.1-.9-2-2-2zm0 4l-8 5-8-5V6l8 5 8-5v2z"/></svg><svg style="left:1763px;top:17.3px" width="13.9" height="14.8" viewBox="3 1 18 20" preserveAspectRatio="none" fill="#c9cfd3"><path d="M19 3h-4.180C14.400 1.840 13.300 1 12 1c-1.300 0-2.400.84-2.820 2H5c-1.100 0-2 .9-2 2v14c0 1.100.9 2 2 2h14c1.100 0 2-.9 2-2V5c0-1.100-.9-2-2-2zm-7 0c.55 0 1 .45 1 1s-.45 1-1 1-1-.45-1-1 .45-1 1-1zm2 14H7v-2h7v2zm3-4H7v-2h10v2zm0-4H7V7h10v2z"/></svg><svg style="left:1815.6px;top:18px" width="14.7" height="14.2" viewBox="3 3 18 18" preserveAspectRatio="none" fill="#c9cfd3"><path d="M6.620 10.790c1.440 2.830 3.760 5.140 6.590 6.590l2.200-2.200c.27-.27.67-.36 1.020-.24 1.120.37 2.330.57 3.570.57.55 0 1 .45 1 1V20c0 .55-.45 1-1 1-9.390 0-17-7.610-17-17 0-.55.45-1 1-1h3.500c.55 0 1 .45 1 1 0 1.250.2 2.450.57 3.570.11.35.03.74-.25 1.020l-2.200 2.200z"/></svg>
</div>
<div class="row" style="top:300px">
<i class="cb" style="left:2px;top:18px"></i>
<div class="av"><svg style="left:0;top:0" width="36" height="36" viewBox="0 0 36 36"><g filter="url(#bl)"><rect x="-2" y="-2" width="40" height="40" fill="#f8f7f7"/><path d="M4 36 Q4.500 25 12 23.500 L24 23.500 Q31 25 31.500 36 Z" fill="#fdfdfd"/><path d="M12.600 10 Q12.600 2.800 18 2.800 Q23.800 2.800 23.800 10 Q26 22 27.800 33 L23.500 34 Q22 24 21.500 17 L14 17 Q13 25 12.500 34.500 L8.500 33.500 Q10.500 21 12.600 10 Z" fill="#4a2c26"/><rect x="15.8" y="17" width="3.8" height="6" fill="#e6b5a2"/><path d="M14 23.500 Q18 27 22 23.500 L21 21 L15 21 Z" fill="#e9bca8"/><ellipse cx="17.7" cy="12.6" rx="4.5" ry="6.4" fill="#eabca8"/><path d="M13 9.500 Q14 4.500 18 4.500 Q22 4.500 22.800 9.500 Q20 6.500 18 6.700 Q15 6.800 13 9.500 Z" fill="#3e2420"/><ellipse cx="17.7" cy="16.2" rx="1.6" ry="0.7" fill="#c03848"/></g></svg></div>
<a class="t" style="left:76px;top:6px;font-size:13px;line-height:21px;color:#4565bd;letter-spacing:0.24px">Carol Binsoxfeu</a>
<span class="t" style="left:76px;top:27px;font-size:11px;line-height:19px;color:#585858;letter-spacing:-0.05px">ABC Security</span>
<i class="pill"></i>
<span class="t" style="left:309px;top:15px;font-size:12px;line-height:20px;color:#12978a;letter-spacing:0.27px">Active</span>
<a class="t" style="left:425px;top:14px;font-size:13px;line-height:21px;color:#4565bd;letter-spacing:0.33px">support+10@cerely.com</a>
<span class="t" style="left:633px;top:14px;font-size:13px;line-height:21px;color:#15394d;letter-spacing:0.2px">1669529826</span>
<span class="t" style="left:818px;top:14px;font-size:13px;line-height:21px;color:#15394d;letter-spacing:0.37px">Operations Manager</span>
<span class="t" style="left:1026px;top:14px;font-size:13px;line-height:21px;color:#15394d;letter-spacing:-0.06px">Casual</span>
<span class="t" style="left:1234px;top:14px;font-size:13px;line-height:21px;color:#15394d;letter-spacing:0.32px">Queensland</span>
<span class="t" style="left:1442px;top:14px;font-size:13px;line-height:21px;color:#15394d;letter-spacing:0.16px">Rating 2 - Poor to Average</span>
<svg style="left:1659px;top:17.3px" width="13.1" height="14.8" viewBox="5 4 15 17" preserveAspectRatio="none" fill="#c9cfd3"><path d="M14.4 6L14 4H5v17h2v-7h5.6l.4 2h7V6z"/></svg><svg style="left:1710.6px;top:18.9px" width="15.1" height="12" viewBox="2 4 20 16" preserveAspectRatio="none" fill="#c9cfd3"><path d="M20 4H4c-1.1 0-1.990.9-1.990 2L2 18c0 1.1.9 2 2 2h16c1.1 0 2-.9 2-2V6c0-1.1-.9-2-2-2zm0 4l-8 5-8-5V6l8 5 8-5v2z"/></svg><svg style="left:1763px;top:17.3px" width="13.9" height="14.8" viewBox="3 1 18 20" preserveAspectRatio="none" fill="#c9cfd3"><path d="M19 3h-4.180C14.400 1.840 13.300 1 12 1c-1.300 0-2.400.84-2.820 2H5c-1.100 0-2 .9-2 2v14c0 1.100.9 2 2 2h14c1.100 0 2-.9 2-2V5c0-1.100-.9-2-2-2zm-7 0c.55 0 1 .45 1 1s-.45 1-1 1-1-.45-1-1 .45-1 1-1zm2 14H7v-2h7v2zm3-4H7v-2h10v2zm0-4H7V7h10v2z"/></svg><svg style="left:1815.6px;top:18px" width="14.7" height="14.2" viewBox="3 3 18 18" preserveAspectRatio="none" fill="#c9cfd3"><path d="M6.620 10.790c1.440 2.830 3.760 5.140 6.590 6.590l2.200-2.200c.27-.27.67-.36 1.020-.24 1.120.37 2.330.57 3.570.57.55 0 1 .45 1 1V20c0 .55-.45 1-1 1-9.390 0-17-7.610-17-17 0-.55.45-1 1-1h3.500c.55 0 1 .45 1 1 0 1.250.2 2.450.57 3.570.11.35.03.74-.25 1.020l-2.200 2.200z"/></svg>
</div>
<div class="row" style="top:350px">
<i class="cb" style="left:2px;top:18px"></i>
<div class="av"><svg style="left:0;top:0" width="36" height="36" viewBox="0 0 36 36"><g filter="url(#bl)"><rect x="-2" y="-2" width="40" height="40" fill="#e2e4e7"/><ellipse cx="18.1" cy="3.3" rx="3.6" ry="3.2" fill="#6e5038"/><path d="M11 17 Q10 6 18 5.500 Q26 6 25.200 17 Q24 20 18 20 Q12 20 11 17 Z" fill="#6e5038"/><path d="M9 36 Q10 27 15 25.500 L21.500 25.500 Q27 27 28 36 Z" fill="#e6b8a2"/><rect x="15.5" y="21" width="5.5" height="6" fill="#dcaa92"/><ellipse cx="18.1" cy="16.4" rx="5.6" ry="7.9" fill="#e6b8a0"/><path d="M12.500 13 Q13 7 18 7.200 Q23 7 23.800 13 Q21.500 9.500 18 9.600 Q14.500 9.600 12.500 13 Z" fill="#6a4a34"/><path d="M3 31 Q6 27.500 12 27 Q13.500 31 14.500 36 L3 36 Z" fill="#62b4ba"/><path d="M33 31 Q30 27.800 25.500 27.500 Q24 31 23 36 L33 36 Z" fill="#62b4ba"/><ellipse cx="18" cy="21.2" rx="1.7" ry="0.7" fill="#c86a70"/></g></svg></div>
<a class="t" style="left:76px;top:6px;font-size:13px;line-height:21px;color:#4565bd;letter-spacing:0.22px">Carri Olson</a>
<span class="t" style="left:76px;top:27px;font-size:11px;line-height:19px;color:#585858;letter-spacing:-0.05px">ABC Security</span>
<i class="pill"></i>
<span class="t" style="left:309px;top:15px;font-size:12px;line-height:20px;color:#12978a;letter-spacing:0.27px">Active</span>
<a class="t" style="left:425px;top:14px;font-size:13px;line-height:21px;color:#4565bd;letter-spacing:0.29px">dmuu63@mailsac.com</a>
<span class="t" style="left:633px;top:14px;font-size:13px;line-height:21px;color:#15394d;letter-spacing:0.2px">0606477851</span>
<span class="t" style="left:818px;top:14px;font-size:13px;line-height:21px;color:#15394d;letter-spacing:0.2px">Registered Nurse</span>
<span class="t" style="left:1026px;top:14px;font-size:13px;line-height:21px;color:#15394d;letter-spacing:0.29px">Part Time</span>
<span class="t" style="left:1234px;top:14px;font-size:13px;line-height:21px;color:#15394d;letter-spacing:0.18px">New South Wales</span>
<span class="t" style="left:1442px;top:14px;font-size:13px;line-height:21px;color:#15394d;letter-spacing:-0.15px">Rating 0 - TBR</span>
<svg style="left:1659px;top:17.3px" width="13.1" height="14.8" viewBox="5 4 15 17" preserveAspectRatio="none" fill="#c9cfd3"><path d="M14.4 6L14 4H5v17h2v-7h5.6l.4 2h7V6z"/></svg><svg style="left:1710.6px;top:18.9px" width="15.1" height="12" viewBox="2 4 20 16" preserveAspectRatio="none" fill="#c9cfd3"><path d="M20 4H4c-1.1 0-1.990.9-1.990 2L2 18c0 1.1.9 2 2 2h16c1.1 0 2-.9 2-2V6c0-1.1-.9-2-2-2zm0 4l-8 5-8-5V6l8 5 8-5v2z"/></svg><svg style="left:1763px;top:17.3px" width="13.9" height="14.8" viewBox="3 1 18 20" preserveAspectRatio="none" fill="#c9cfd3"><path d="M19 3h-4.180C14.400 1.840 13.300 1 12 1c-1.300 0-2.400.84-2.820 2H5c-1.100 0-2 .9-2 2v14c0 1.100.9 2 2 2h14c1.100 0 2-.9 2-2V5c0-1.100-.9-2-2-2zm-7 0c.55 0 1 .45 1 1s-.45 1-1 1-1-.45-1-1 .45-1 1-1zm2 14H7v-2h7v2zm3-4H7v-2h10v2zm0-4H7V7h10v2z"/></svg><svg style="left:1815.6px;top:18px" width="14.7" height="14.2" viewBox="3 3 18 18" preserveAspectRatio="none" fill="#c9cfd3"><path d="M6.620 10.790c1.440 2.830 3.760 5.140 6.590 6.590l2.200-2.200c.27-.27.67-.36 1.020-.24 1.120.37 2.330.57 3.570.57.55 0 1 .45 1 1V20c0 .55-.45 1-1 1-9.390 0-17-7.610-17-17 0-.55.45-1 1-1h3.500c.55 0 1 .45 1 1 0 1.250.2 2.450.57 3.570.11.35.03.74-.25 1.020l-2.200 2.200z"/></svg>
</div>
<div class="row" style="top:400px">
<i class="cb" style="left:2px;top:18px"></i>
<div class="av"><svg style="left:0;top:0" width="36" height="36" viewBox="0 0 36 36"><g filter="url(#bl)"><rect x="-2" y="-2" width="40" height="40" fill="#e9eaec"/><path d="M3.500 36 Q5 27 12.500 25 L18.600 29.500 L24.500 25 Q32 27 33.500 36 Z" fill="#2a3242"/><path d="M15.200 21 L22 21 L22.500 25.500 L18.600 29 L14.500 25.500 Z" fill="#dcae98"/><ellipse cx="18.6" cy="14.3" rx="6" ry="8" fill="#e6baa4"/><path d="M12 14 Q10.500 2 19.500 1.200 Q27.500 2 25.600 14 Q24.500 8 19 7.600 Q14 8 12 14 Z" fill="#3c2a22"/><ellipse cx="18.6" cy="19.8" rx="3" ry="1" fill="#caa08e"/></g></svg></div>
<a class="t" style="left:76px;top:6px;font-size:13px;line-height:21px;color:#4565bd;letter-spacing:0.17px">Charles Larkin</a>
<span class="t" style="left:76px;top:27px;font-size:11px;line-height:19px;color:#585858;letter-spacing:-0.05px">ABC Security</span>
<i class="pill"></i>
<span class="t" style="left:309px;top:15px;font-size:12px;line-height:20px;color:#12978a;letter-spacing:0.27px">Active</span>
<a class="t" style="left:425px;top:14px;font-size:13px;line-height:21px;color:#4565bd;letter-spacing:0.19px">xnvq16@mailsac.com</a>
<span class="t" style="left:633px;top:14px;font-size:13px;line-height:21px;color:#15394d;letter-spacing:0.2px">3666929001</span>
<span class="t" style="left:818px;top:14px;font-size:13px;line-height:21px;color:#15394d;letter-spacing:0.2px">Registered Nurse</span>
<span class="t" style="left:1026px;top:14px;font-size:13px;line-height:21px;color:#15394d;letter-spacing:0.2px">Full Time</span>
<span class="t" style="left:1234px;top:14px;font-size:13px;line-height:21px;color:#15394d;letter-spacing:0.32px">Queensland</span>
<span class="t" style="left:1442px;top:14px;font-size:13px;line-height:21px;color:#15394d;letter-spacing:0.09px">Rating 3 - Average</span>
<svg style="left:1659px;top:17.3px" width="13.1" height="14.8" viewBox="5 4 15 17" preserveAspectRatio="none" fill="#c9cfd3"><path d="M14.4 6L14 4H5v17h2v-7h5.6l.4 2h7V6z"/></svg><svg style="left:1710.6px;top:18.9px" width="15.1" height="12" viewBox="2 4 20 16" preserveAspectRatio="none" fill="#c9cfd3"><path d="M20 4H4c-1.1 0-1.990.9-1.990 2L2 18c0 1.1.9 2 2 2h16c1.1 0 2-.9 2-2V6c0-1.1-.9-2-2-2zm0 4l-8 5-8-5V6l8 5 8-5v2z"/></svg><svg style="left:1763px;top:17.3px" width="13.9" height="14.8" viewBox="3 1 18 20" preserveAspectRatio="none" fill="#c9cfd3"><path d="M19 3h-4.180C14.400 1.840 13.300 1 12 1c-1.300 0-2.400.84-2.820 2H5c-1.100 0-2 .9-2 2v14c0 1.100.9 2 2 2h14c1.100 0 2-.9 2-2V5c0-1.100-.9-2-2-2zm-7 0c.55 0 1 .45 1 1s-.45 1-1 1-1-.45-1-1 .45-1 1-1zm2 14H7v-2h7v2zm3-4H7v-2h10v2zm0-4H7V7h10v2z"/></svg><svg style="left:1815.6px;top:18px" width="14.7" height="14.2" viewBox="3 3 18 18" preserveAspectRatio="none" fill="#c9cfd3"><path d="M6.620 10.790c1.440 2.830 3.760 5.140 6.590 6.590l2.200-2.200c.27-.27.67-.36 1.020-.24 1.120.37 2.330.57 3.570.57.55 0 1 .45 1 1V20c0 .55-.45 1-1 1-9.390 0-17-7.610-17-17 0-.55.45-1 1-1h3.500c.55 0 1 .45 1 1 0 1.250.2 2.450.57 3.570.11.35.03.74-.25 1.020l-2.200 2.200z"/></svg>
</div>
<div class="row" style="top:450px">
<i class="cb" style="left:2px;top:18px"></i>
<div class="av"><svg style="left:0;top:0" width="36" height="36" viewBox="0 0 36 36"><g filter="url(#bl)"><rect x="-2" y="-2" width="40" height="40" fill="#d9d0bc"/><rect x="0" y="0" width="9" height="36" fill="#e6dfd0"/><rect x="28.5" y="0" width="3" height="36" fill="#e4dcc8"/><rect x="31" y="4" width="4" height="28" fill="#8c8c72"/><path d="M4 36 Q6 30 12 29 L24.500 29 Q30 30 32 36 Z" fill="#8c8a78"/><rect x="14.5" y="25" width="7.5" height="5" fill="#c48c6c"/><ellipse cx="18.1" cy="17.5" rx="7.4" ry="9.6" fill="#d6a07e"/><path d="M10.800 19 Q11 28.500 18.100 28.800 Q25.200 28.500 25.500 19 Q24 23 18.100 22.600 Q12.500 23 10.800 19 Z" fill="#6a4632"/><ellipse cx="18.1" cy="22.3" rx="2.4" ry="0.9" fill="#f0e4dc"/><path d="M9.800 15 Q8 2 18 0.500 Q28 1.500 26.400 15 Q25 9 18 8.600 Q11.500 9 9.800 15 Z" fill="#3a2a20"/><rect x="12.5" y="14.8" width="4.2" height="1" fill="#4a3428"/><rect x="19.8" y="14.8" width="4.2" height="1" fill="#4a3428"/></g></svg></div>
<a class="t" style="left:76px;top:6px;font-size:13px;line-height:21px;color:#4565bd;letter-spacing:0.35px">Christopher Dodge</a>
<span class="t" style="left:76px;top:27px;font-size:11px;line-height:19px;color:#585858;letter-spacing:-0.05px">ABC Security</span>
<i class="pill"></i>
<span class="t" style="left:309px;top:15px;font-size:12px;line-height:20px;color:#12978a;letter-spacing:0.27px">Active</span>
<a class="t" style="left:425px;top:14px;font-size:13px;line-height:21px;color:#4565bd;letter-spacing:0.08px">chris_2009@live.com.au</a>
<span class="t" style="left:633px;top:14px;font-size:13px;line-height:21px;color:#15394d;letter-spacing:-0.16px">-</span>
<span class="t" style="left:818px;top:14px;font-size:13px;line-height:21px;color:#15394d;letter-spacing:0.26px">Security Officer</span>
<span class="t" style="left:1026px;top:14px;font-size:13px;line-height:21px;color:#15394d;letter-spacing:0.2px">Full Time</span>
<span class="t" style="left:1234px;top:14px;font-size:13px;line-height:21px;color:#15394d;letter-spacing:0.32px">Queensland</span>
<span class="t" style="left:1442px;top:14px;font-size:13px;line-height:21px;color:#15394d;letter-spacing:0.12px">Rating 4 - Average to Excellent</span>
<svg style="left:1659px;top:17.3px" width="13.1" height="14.8" viewBox="5 4 15 17" preserveAspectRatio="none" fill="#c9cfd3"><path d="M14.4 6L14 4H5v17h2v-7h5.6l.4 2h7V6z"/></svg><svg style="left:1710.6px;top:18.9px" width="15.1" height="12" viewBox="2 4 20 16" preserveAspectRatio="none" fill="#c9cfd3"><path d="M20 4H4c-1.1 0-1.990.9-1.990 2L2 18c0 1.1.9 2 2 2h16c1.1 0 2-.9 2-2V6c0-1.1-.9-2-2-2zm0 4l-8 5-8-5V6l8 5 8-5v2z"/></svg><svg style="left:1763px;top:17.3px" width="13.9" height="14.8" viewBox="3 1 18 20" preserveAspectRatio="none" fill="#c9cfd3"><path d="M19 3h-4.180C14.400 1.840 13.300 1 12 1c-1.300 0-2.400.84-2.820 2H5c-1.100 0-2 .9-2 2v14c0 1.100.9 2 2 2h14c1.100 0 2-.9 2-2V5c0-1.100-.9-2-2-2zm-7 0c.55 0 1 .45 1 1s-.45 1-1 1-1-.45-1-1 .45-1 1-1zm2 14H7v-2h7v2zm3-4H7v-2h10v2zm0-4H7V7h10v2z"/></svg><svg style="left:1815.6px;top:18px" width="14.7" height="14.2" viewBox="3 3 18 18" preserveAspectRatio="none" fill="#c9cfd3"><path d="M6.620 10.790c1.440 2.830 3.760 5.140 6.590 6.590l2.200-2.200c.27-.27.67-.36 1.020-.24 1.120.37 2.330.57 3.570.57.55 0 1 .45 1 1V20c0 .55-.45 1-1 1-9.390 0-17-7.610-17-17 0-.55.45-1 1-1h3.500c.55 0 1 .45 1 1 0 1.250.2 2.450.57 3.570.11.35.03.74-.25 1.020l-2.200 2.200z"/></svg>
</div>
<div class="row" style="top:500px">
<i class="cb" style="left:2px;top:18px"></i>
<div class="av"><svg style="left:0;top:0" width="36" height="36" viewBox="0 0 36 36"><g filter="url(#bl)"><rect x="-2" y="-2" width="40" height="40" fill="#ffffff"/><path d="M8 36 Q9 32.500 13 31.500 L22.500 31.500 Q26 32.500 27 35 L27 36 Z" fill="#eccab6"/><path d="M9 16 Q8 9 9.500 9 L25 9 Q26.500 9 25.600 16 Q25.500 27 21 31.500 Q17.500 34 14 31.500 Q9.500 27 9 16 Z" fill="#eecbb8"/><path d="M10.500 22 Q11.500 30 14.500 32 Q17.500 33.500 20.500 32 Q23.500 30 24.600 22 Q22 27.500 17.500 27.600 Q13 27.500 10.500 22 Z" fill="#c29c86"/><path d="M8.500 15.500 Q4.500 6 12 3 Q20 -0.500 26 5 Q27.500 10 25.800 15.500 Q24.500 11 20 11.500 Q13 12 10 11.500 Q8.800 13 8.500 15.500 Z" fill="#6e3a20"/><path d="M12 5 Q17 2 22 4.500 Q18 5 15 8 Z" fill="#9a5a34"/><rect x="10.8" y="17.2" width="5" height="1.1" fill="#6a5050"/><rect x="19.2" y="17.2" width="5" height="1.1" fill="#6a5050"/><ellipse cx="17.5" cy="26.6" rx="2.5" ry="0.9" fill="#d89a94"/></g></svg></div>
<a class="t" style="left:76px;top:6px;font-size:13px;line-height:21px;color:#4565bd;letter-spacing:0.18px">Cinda Considine</a>
<span class="t" style="left:76px;top:27px;font-size:11px;line-height:19px;color:#585858;letter-spacing:-0.05px">ABC Security</span>
<i class="pill"></i>
<span class="t" style="left:309px;top:15px;font-size:12px;line-height:20px;color:#12978a;letter-spacing:0.27px">Active</span>
<a class="t" style="left:425px;top:14px;font-size:13px;line-height:21px;color:#4565bd;letter-spacing:0.17px">sroa17@mailsac.com</a>
<span class="t" style="left:633px;top:14px;font-size:13px;line-height:21px;color:#15394d;letter-spacing:0.2px">8520102335</span>
<span class="t" style="left:818px;top:14px;font-size:13px;line-height:21px;color:#15394d;letter-spacing:0.37px">Mobile Patrol Officer</span>
<span class="t" style="left:1026px;top:14px;font-size:13px;line-height:21px;color:#15394d;letter-spacing:-0.06px">Casual</span>
<span class="t" style="left:1234px;top:14px;font-size:13px;line-height:21px;color:#15394d;letter-spacing:0.32px">Queensland</span>
<span class="t" style="left:1442px;top:14px;font-size:13px;line-height:21px;color:#15394d;letter-spacing:-0.15px">Rating 0 - TBR</span>
<svg style="left:1659px;top:17.3px" width="13.1" height="14.8" viewBox="5 4 15 17" preserveAspectRatio="none" fill="#c9cfd3"><path d="M14.4 6L14 4H5v17h2v-7h5.6l.4 2h7V6z"/></svg><svg style="left:1710.6px;top:18.9px" width="15.1" height="12" viewBox="2 4 20 16" preserveAspectRatio="none" fill="#c9cfd3"><path d="M20 4H4c-1.1 0-1.990.9-1.990 2L2 18c0 1.1.9 2 2 2h16c1.1 0 2-.9 2-2V6c0-1.1-.9-2-2-2zm0 4l-8 5-8-5V6l8 5 8-5v2z"/></svg><svg style="left:1763px;top:17.3px" width="13.9" height="14.8" viewBox="3 1 18 20" preserveAspectRatio="none" fill="#c9cfd3"><path d="M19 3h-4.180C14.400 1.840 13.300 1 12 1c-1.300 0-2.400.84-2.820 2H5c-1.100 0-2 .9-2 2v14c0 1.100.9 2 2 2h14c1.100 0 2-.9 2-2V5c0-1.100-.9-2-2-2zm-7 0c.55 0 1 .45 1 1s-.45 1-1 1-1-.45-1-1 .45-1 1-1zm2 14H7v-2h7v2zm3-4H7v-2h10v2zm0-4H7V7h10v2z"/></svg><svg style="left:1815.6px;top:18px" width="14.7" height="14.2" viewBox="3 3 18 18" preserveAspectRatio="none" fill="#c9cfd3"><path d="M6.620 10.790c1.440 2.830 3.760 5.140 6.590 6.590l2.200-2.200c.27-.27.67-.36 1.020-.24 1.120.37 2.330.57 3.570.57.55 0 1 .45 1 1V20c0 .55-.45 1-1 1-9.390 0-17-7.610-17-17 0-.55.45-1 1-1h3.500c.55 0 1 .45 1 1 0 1.250.2 2.450.57 3.570.11.35.03.74-.25 1.020l-2.200 2.200z"/></svg>
</div>
<div class="row" style="top:550px">
<i class="cb" style="left:2px;top:18px"></i>
<div class="av"><svg style="left:0;top:0" width="36" height="36" viewBox="0 0 36 36"><g filter="url(#bl)"><rect x="-2" y="-2" width="40" height="40" fill="#d8d8de"/><path d="M2 36 Q3 27.500 11 26 L24 26 Q32 27.500 33.500 36 Z" fill="#f0c6ae"/><rect x="14.5" y="21" width="6" height="6" fill="#e4b49c"/><ellipse cx="17.4" cy="14.6" rx="6.2" ry="8.2" fill="#e8bca4"/><path d="M10.800 14 Q9.500 3 15 0.500 Q17.500 -1.500 20.500 0.500 Q26 3 24.200 15 Q23.500 8.500 18 7.500 Q13 8.500 10.800 14 Z" fill="#2c1c1a"/><ellipse cx="17.2" cy="20.5" rx="1.9" ry="0.8" fill="#e06a78"/><rect x="12.5" y="13.3" width="3.8" height="1" fill="#5a4040"/><rect x="18.8" y="13.3" width="3.8" height="1" fill="#5a4040"/><path d="M27 33 L32 29 L33 31 L29 35 Z" fill="#c8c4e8"/></g></svg></div>
<a class="t" style="left:76px;top:6px;font-size:13px;line-height:21px;color:#4565bd;letter-spacing:0.25px">Clair Satterfield</a>
<span class="t" style="left:76px;top:27px;font-size:11px;line-height:19px;color:#585858;letter-spacing:0.24px">Arrow Security</span>
<i class="pill"></i>
<span class="t" style="left:309px;top:15px;font-size:12px;line-height:20px;color:#12978a;letter-spacing:0.27px">Active</span>
<a class="t" style="left:425px;top:14px;font-size:13px;line-height:21px;color:#4565bd;letter-spacing:0.13px">ziyo51@mailsac.com</a>
<span class="t" style="left:633px;top:14px;font-size:13px;line-height:21px;color:#15394d;letter-spacing:0.2px">4080729093</span>
<span class="t" style="left:818px;top:14px;font-size:13px;line-height:21px;color:#15394d;letter-spacing:0.28px">Nurse Assistant</span>
<span class="t" style="left:1026px;top:14px;font-size:13px;line-height:21px;color:#15394d;letter-spacing:0.2px">Full Time</span>
<span class="t" style="left:1234px;top:14px;font-size:13px;line-height:21px;color:#15394d;letter-spacing:0.32px">Queensland</span>
<span class="t" style="left:1442px;top:14px;font-size:13px;line-height:21px;color:#15394d;letter-spacing:0.09px">Rating 3 - Average</span>
<svg style="left:1659px;top:17.3px" width="13.1" height="14.8" viewBox="5 4 15 17" preserveAspectRatio="none" fill="#c9cfd3"><path d="M14.4 6L14 4H5v17h2v-7h5.6l.4 2h7V6z"/></svg><svg style="left:1710.6px;top:18.9px" width="15.1" height="12" viewBox="2 4 20 16" preserveAspectRatio="none" fill="#c9cfd3"><path d="M20 4H4c-1.1 0-1.990.9-1.990 2L2 18c0 1.1.9 2 2 2h16c1.1 0 2-.9 2-2V6c0-1.1-.9-2-2-2zm0 4l-8 5-8-5V6l8 5 8-5v2z"/></svg><svg style="left:1763px;top:17.3px" width="13.9" height="14.8" viewBox="3 1 18 20" preserveAspectRatio="none" fill="#c9cfd3"><path d="M19 3h-4.180C14.400 1.840 13.300 1 12 1c-1.300 0-2.400.84-2.820 2H5c-1.100 0-2 .9-2 2v14c0 1.100.9 2 2 2h14c1.100 0 2-.9 2-2V5c0-1.100-.9-2-2-2zm-7 0c.55 0 1 .45 1 1s-.45 1-1 1-1-.45-1-1 .45-1 1-1zm2 14H7v-2h7v2zm3-4H7v-2h10v2zm0-4H7V7h10v2z"/></svg><svg style="left:1815.6px;top:18px" width="14.7" height="14.2" viewBox="3 3 18 18" preserveAspectRatio="none" fill="#c9cfd3"><path d="M6.620 10.790c1.440 2.830 3.760 5.140 6.590 6.590l2.200-2.200c.27-.27.67-.36 1.020-.24 1.120.37 2.330.57 3.570.57.55 0 1 .45 1 1V20c0 .55-.45 1-1 1-9.390 0-17-7.610-17-17 0-.55.45-1 1-1h3.500c.55 0 1 .45 1 1 0 1.250.2 2.450.57 3.570.11.35.03.74-.25 1.020l-2.200 2.200z"/></svg>
</div>
<div class="row" style="top:600px">
<i class="cb" style="left:2px;top:18px"></i>
<div class="av"><svg style="left:0;top:0" width="36" height="36" viewBox="0 0 36 36"><g filter="url(#bl)"><rect x="-2" y="-2" width="40" height="40" fill="#fffef6"/><path d="M4.500 29.500 Q10 36.500 18 36.500 Q26 36.500 31.500 29.500 Q26 31.500 18 31 Q10 31.500 4.500 29.500 Z" fill="#8fdc4e"/><path d="M8 31 Q12 33.500 16 32 Q14 35 11 34 Z" fill="#d6e636"/><path d="M22 32.500 Q26 33 29 31 Q26 35 23 35 Z" fill="#b6ec7a"/><ellipse cx="19.2" cy="30" rx="4.4" ry="3.6" fill="#120604"/><ellipse cx="17.3" cy="2.6" rx="3.4" ry="2.7" fill="#120604"/><path d="M10.400 14 Q10 4 18 2 Q27 0.500 31 6 Q33.500 10 32.500 17 Q33 24 27 27.500 Q20 30 14.500 26.500 Q10 23 10.400 14 Z" fill="#7a1c02"/><ellipse cx="12.6" cy="19.8" rx="3" ry="5" fill="#120604"/><ellipse cx="32.9" cy="19" rx="1.2" ry="3.3" fill="#120604"/><ellipse cx="32.5" cy="8.5" rx="0.9" ry="1.2" fill="#120604"/><ellipse cx="23" cy="9.2" rx="5.2" ry="3.6" fill="#3c0c00"/><ellipse cx="19.9" cy="8.6" rx="1.25" ry="1.5" fill="#e8dc4a"/><ellipse cx="26" cy="9.6" rx="1.15" ry="1.4" fill="#e8dc4a"/><ellipse cx="22.4" cy="12.2" rx="2.3" ry="1.6" fill="#120604"/></g></svg></div>
<a class="t" style="left:76px;top:6px;font-size:13px;line-height:21px;color:#4565bd;letter-spacing:0.25px">Connie Greenmg</a>
<span class="t" style="left:76px;top:27px;font-size:11px;line-height:19px;color:#585858;letter-spacing:-0.05px">ABC Security</span>
<i class="pill"></i>
<span class="t" style="left:309px;top:15px;font-size:12px;line-height:20px;color:#12978a;letter-spacing:0.27px">Active</span>
<a class="t" style="left:425px;top:14px;font-size:13px;line-height:21px;color:#4565bd;letter-spacing:0.18px">jayt40@mailsac.com</a>
<span class="t" style="left:633px;top:14px;font-size:13px;line-height:21px;color:#15394d;letter-spacing:0.2px">7900675790</span>
<span class="t" style="left:818px;top:14px;font-size:13px;line-height:21px;color:#15394d;letter-spacing:0.2px">Registered Nurse</span>
<span class="t" style="left:1026px;top:14px;font-size:13px;line-height:21px;color:#15394d;letter-spacing:0.29px">Part Time</span>
<span class="t" style="left:1234px;top:14px;font-size:13px;line-height:21px;color:#15394d;letter-spacing:0.18px">New South Wales</span>
<span class="t" style="left:1442px;top:14px;font-size:13px;line-height:21px;color:#15394d;letter-spacing:0.09px">Rating 1 - Poor</span>
<svg style="left:1659px;top:17.3px" width="13.1" height="14.8" viewBox="5 4 15 17" preserveAspectRatio="none" fill="#c9cfd3"><path d="M14.4 6L14 4H5v17h2v-7h5.6l.4 2h7V6z"/></svg><svg style="left:1710.6px;top:18.9px" width="15.1" height="12" viewBox="2 4 20 16" preserveAspectRatio="none" fill="#c9cfd3"><path d="M20 4H4c-1.1 0-1.990.9-1.990 2L2 18c0 1.1.9 2 2 2h16c1.1 0 2-.9 2-2V6c0-1.1-.9-2-2-2zm0 4l-8 5-8-5V6l8 5 8-5v2z"/></svg><svg style="left:1763px;top:17.3px" width="13.9" height="14.8" viewBox="3 1 18 20" preserveAspectRatio="none" fill="#c9cfd3"><path d="M19 3h-4.180C14.400 1.840 13.300 1 12 1c-1.300 0-2.400.84-2.820 2H5c-1.100 0-2 .9-2 2v14c0 1.100.9 2 2 2h14c1.100 0 2-.9 2-2V5c0-1.100-.9-2-2-2zm-7 0c.55 0 1 .45 1 1s-.45 1-1 1-1-.45-1-1 .45-1 1-1zm2 14H7v-2h7v2zm3-4H7v-2h10v2zm0-4H7V7h10v2z"/></svg><svg style="left:1815.6px;top:18px" width="14.7" height="14.2" viewBox="3 3 18 18" preserveAspectRatio="none" fill="#c9cfd3"><path d="M6.620 10.790c1.440 2.830 3.760 5.140 6.590 6.590l2.200-2.200c.27-.27.67-.36 1.020-.24 1.120.37 2.330.57 3.570.57.55 0 1 .45 1 1V20c0 .55-.45 1-1 1-9.390 0-17-7.610-17-17 0-.55.45-1 1-1h3.500c.55 0 1 .45 1 1 0 1.250.2 2.450.57 3.570.11.35.03.74-.25 1.020l-2.200 2.200z"/></svg>
</div>
<div class="row" style="top:650px">
<i class="cb" style="left:2px;top:18px"></i>
<div class="av"><svg style="left:0;top:0" width="36" height="36" viewBox="0 0 36 36"><rect x="0" y="0" width="36" height="36" fill="url(#pg)"/><circle cx="18" cy="12.900" r="8.600" fill="#e6e6e8"/><circle cx="18" cy="12.900" r="7.900" fill="#b7b7bb"/><path d="M5.600 36 Q5.600 22 18 22 Q30.400 22 30.400 36 Z" fill="#b1b1b5"/></svg></div>
<a class="t" style="left:76px;top:6px;font-size:13px;line-height:21px;color:#4565bd;letter-spacing:0.44px">contractor 4</a>
<span class="t" style="left:76px;top:27px;font-size:11px;line-height:19px;color:#585858;letter-spacing:-0.05px">ABC Security</span>
<i class="pill"></i>
<span class="t" style="left:309px;top:15px;font-size:12px;line-height:20px;color:#12978a;letter-spacing:0.27px">Active</span>
<a class="t" style="left:425px;top:14px;font-size:13px;line-height:21px;color:#4565bd;letter-spacing:0.3px">contractor4@mailsac.com</a>
<span class="t" style="left:633px;top:14px;font-size:13px;line-height:21px;color:#15394d;letter-spacing:-0.16px">-</span>
<span class="t" style="left:818px;top:14px;font-size:13px;line-height:21px;color:#15394d;letter-spacing:0.26px">Security Officer</span>
<span class="t" style="left:1026px;top:14px;font-size:13px;line-height:21px;color:#15394d;letter-spacing:-0.06px">Casual</span>
<span class="t" style="left:1234px;top:14px;font-size:13px;line-height:21px;color:#15394d;letter-spacing:0.32px">Queensland</span>
<span class="t" style="left:1442px;top:14px;font-size:13px;line-height:21px;color:#15394d;letter-spacing:-0.15px">Rating 0 - TBR</span>
<svg style="left:1659px;top:17.3px" width="13.1" height="14.8" viewBox="5 4 15 17" preserveAspectRatio="none" fill="#c9cfd3"><path d="M14.4 6L14 4H5v17h2v-7h5.6l.4 2h7V6z"/></svg><svg style="left:1710.6px;top:18.9px" width="15.1" height="12" viewBox="2 4 20 16" preserveAspectRatio="none" fill="#c9cfd3"><path d="M20 4H4c-1.1 0-1.990.9-1.990 2L2 18c0 1.1.9 2 2 2h16c1.1 0 2-.9 2-2V6c0-1.1-.9-2-2-2zm0 4l-8 5-8-5V6l8 5 8-5v2z"/></svg><svg style="left:1763px;top:17.3px" width="13.9" height="14.8" viewBox="3 1 18 20" preserveAspectRatio="none" fill="#c9cfd3"><path d="M19 3h-4.180C14.400 1.840 13.300 1 12 1c-1.300 0-2.400.84-2.820 2H5c-1.100 0-2 .9-2 2v14c0 1.100.9 2 2 2h14c1.100 0 2-.9 2-2V5c0-1.100-.9-2-2-2zm-7 0c.55 0 1 .45 1 1s-.45 1-1 1-1-.45-1-1 .45-1 1-1zm2 14H7v-2h7v2zm3-4H7v-2h10v2zm0-4H7V7h10v2z"/></svg><svg style="left:1815.6px;top:18px" width="14.7" height="14.2" viewBox="3 3 18 18" preserveAspectRatio="none" fill="#c9cfd3"><path d="M6.620 10.790c1.440 2.830 3.760 5.140 6.590 6.590l2.200-2.200c.27-.27.67-.36 1.020-.24 1.120.37 2.330.57 3.570.57.55 0 1 .45 1 1V20c0 .55-.45 1-1 1-9.390 0-17-7.610-17-17 0-.55.45-1 1-1h3.500c.55 0 1 .45 1 1 0 1.250.2 2.450.57 3.570.11.35.03.74-.25 1.020l-2.200 2.200z"/></svg>
</div>
</div>
<i class="scroll-track"></i><i class="scroll-thumb"></i>
<footer class="footer">
<span class="t" style="left:860px;top:5px;font-size:13px;line-height:21px;color:#1b384b;letter-spacing:0.3px">50 per view</span>
<i class="caret" style="left:937.5px;top:14px;border-left-width:4.0px;border-right-width:4.0px;border-top:5px solid #5b5b8c"></i>
<svg style="left:981px;top:11px" width="8" height="10" viewBox="0 0 8 10" fill="none" stroke="#b9bcd3" stroke-width="1.4"><path d="M6 0.800 L1.600 5 L6 9.200"/></svg>
<span class="t" style="left:998.4px;top:5px;font-size:13px;line-height:21px;color:#1b384b;letter-spacing:0.29px">1 of 3</span>
<svg style="left:1041px;top:11px" width="8" height="10" viewBox="0 0 8 10" fill="none" stroke="#5b5b8c" stroke-width="1.4"><path d="M2 0.800 L6.400 5 L2 9.200"/></svg>
<span class="t" style="left:1626px;top:7px;font-size:13px;line-height:21px;color:#555b62;letter-spacing:0.01px">Powered by</span>
<a class="t" style="left:1698.5px;top:7px;font-size:13px;line-height:21px;color:#4565bd;letter-spacing:0.06px">Cerely Workforce Management</a>
</footer>
<svg style="left:0;top:0" width="1906" height="937" viewBox="0 0 1906 937" fill="none"><rect x="11.9" y="174.1" width="250.6" height="742.1" stroke="#e41b1e" stroke-width="1.800"/></svg>
</body>
</html>
